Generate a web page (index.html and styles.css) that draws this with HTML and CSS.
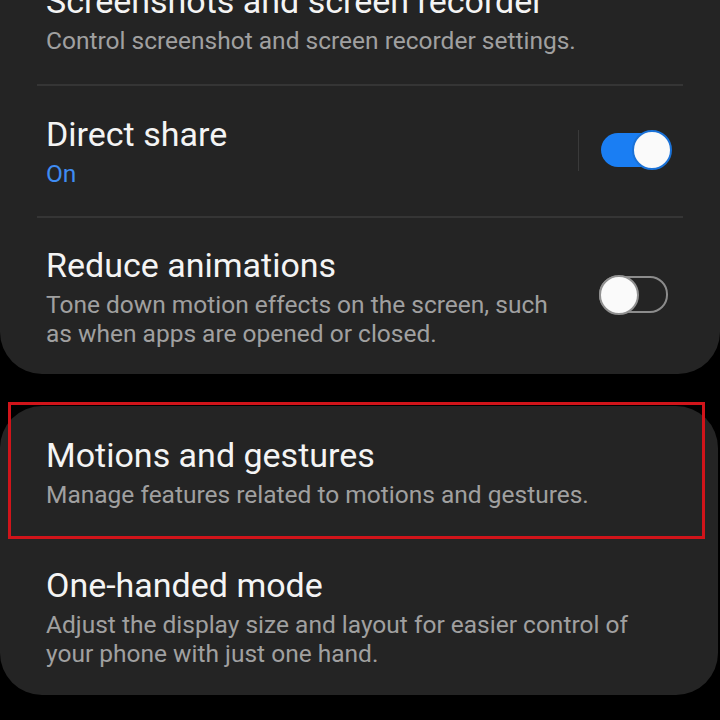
FILE: index.html
```html
<!DOCTYPE html>
<html>
<head>
<meta charset="utf-8">
<link rel="stylesheet" href="styles.css">
</head>
<body>
<div class="screen">
  <section class="card card-top">
    <div class="row row-first">
      <div class="text">
        <div class="title">Screenshots and screen recorder</div>
        <div class="sub">Control screenshot and screen recorder settings.</div>
      </div>
    </div>
    <div class="divider"></div>
    <div class="row row-share">
      <div class="text">
        <div class="title">Direct share</div>
        <div class="sub on">On</div>
      </div>
      <div class="vsep"></div>
      <div class="switch switch-on"><span class="knob"></span></div>
    </div>
    <div class="divider"></div>
    <div class="row row-reduce">
      <div class="text narrow">
        <div class="title">Reduce animations</div>
        <div class="sub">Tone down motion effects on the screen, such as when apps are opened or closed.</div>
      </div>
      <div class="switch switch-off"><span class="knob"></span></div>
    </div>
  </section>

  <section class="card card-bottom">
    <div class="row row-motions">
      <div class="text">
        <div class="title">Motions and gestures</div>
        <div class="sub">Manage features related to motions and gestures.</div>
      </div>
    </div>
    <div class="row row-onehand">
      <div class="text wide">
        <div class="title">One-handed mode</div>
        <div class="sub">Adjust the display size and layout for easier control of your phone with just one hand.</div>
      </div>
    </div>
  </section>

  <div class="highlight"></div>
</div>
</body>
</html>
```

FILE: styles.css
```css
html, body {
  margin: 0;
  padding: 0;
  background: #000;
}

.screen {
  position: relative;
  width: 720px;
  height: 720px;
  overflow: hidden;
  background: #000;
  font-family: Roboto, "Noto Sans", "Liberation Sans", sans-serif;
}

.card {
  background: #242424;
  border-radius: 42px;
  display: flex;
  flex-direction: column;
}

.card-top {
  margin-top: -49px;
}

.card-bottom {
  margin-top: 32px;
  width: 718px;
}

.row {
  display: flex;
  align-items: center;
  padding: 0 52px 0 46px;
}

.text {
  flex: 1;
  min-width: 0;
}

.text.narrow {
  max-width: 520px;
  flex: none;
  margin-right: auto;
}

.text.wide {
  max-width: 600px;
  flex: none;
}

.title {
  color: #f4f4f4;
  font-size: 34px;
  line-height: 44px;
}

.sub {
  color: #a0a0a0;
  font-size: 24.5px;
  line-height: 29px;
  margin-top: 3px;
}

.sub.on {
  color: #3f8cf2;
}

.row-first { padding-top: 28px; padding-bottom: 29px; }
.row-share { padding-top: 26px; padding-bottom: 28px; }
.row-reduce { padding-top: 25px; padding-bottom: 26px; }
.row-motions { padding-top: 27px; padding-bottom: 27px; }
.row-onehand { padding-top: 27px; padding-bottom: 27px; }

.divider {
  height: 2px;
  margin: 0 37px;
  background: #353535;
}

.vsep {
  width: 1px;
  height: 41px;
  background: #3a3a3a;
  margin-right: 22px;
}

.switch {
  position: relative;
  box-sizing: border-box;
  width: 69px;
  height: 36px;
  border-radius: 18px;
  flex: none;
}

.switch-on {
  background: #1a7ef3;
  height: 34px;
  margin-right: -2px;
}

.switch-off {
  border: 2px solid #8c8c8c;
  background: transparent;
  height: 37px;
  margin-top: -2px;
}

.knob {
  position: absolute;
  top: 50%;
  width: 40px;
  height: 40px;
  box-sizing: border-box;
  border-radius: 50%;
  background: #fafafa;
  transform: translateY(-50%);
}

.switch-on .knob {
  right: -2px;
  border: 2px solid #1a72d8;
}

.switch-off .knob {
  left: -2px;
  border: 2px solid #909090;
}

.highlight {
  position: absolute;
  left: 8px;
  top: 402px;
  width: 697px;
  height: 137px;
  box-sizing: border-box;
  border: 3px solid #d0141a;
}
```
